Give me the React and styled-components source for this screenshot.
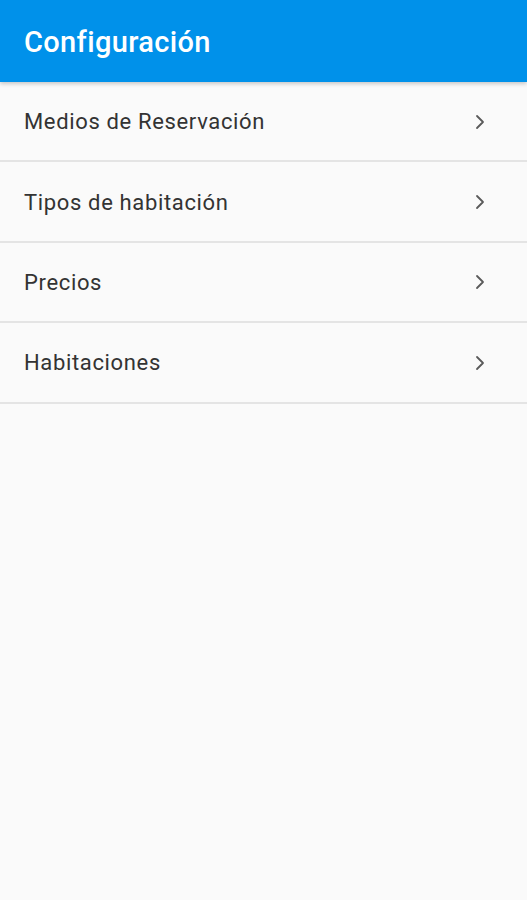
import React from "react";
import styled, { createGlobalStyle } from "styled-components";

const Global = createGlobalStyle`
  html, body { margin: 0; padding: 0; background: #fafafa; }
  body { font-family: Roboto, "Noto Sans", sans-serif; }
`;

const Page = styled.div`
  min-height: 900px;
  background: #fafafa;
  display: flex;
  flex-direction: column;
`;

const AppBar = styled.header`
  height: 82px;
  box-sizing: border-box;
  background: #0091ea;
  display: flex;
  align-items: center;
  padding: 2px 24px 0;
  box-shadow: 0 2px 4px rgba(0, 0, 0, 0.2);
  position: relative;
  z-index: 1;
`;

const Title = styled.h1`
  margin: 0;
  color: #ffffff;
  font-family: Roboto, sans-serif;
  font-weight: 500;
  font-size: 29px;
  letter-spacing: 0.35px;
`;

const List = styled.ul`
  list-style: none;
  margin: 0;
  padding: 0;
`;

const Row = styled.li`
  box-sizing: border-box;
  height: 80.4px;
  display: flex;
  align-items: center;
  justify-content: space-between;
  padding: 1px 42px 0 24px;
  border-bottom: 2px solid #e4e4e4;
`;

const Label = styled.span`
  font-family: Roboto, sans-serif;
  font-size: 22px;
  letter-spacing: 0.65px;
  color: #333333;
`;

const Chevron = () => (
  <svg width="10" height="16" viewBox="0 0 10 16" fill="none">
    <path d="M2 2 L8 8 L2 14" stroke="#5a5a5a" strokeWidth="1.8" strokeLinecap="round" strokeLinejoin="round" />
  </svg>
);

const items = ["Medios de Reservación", "Tipos de habitación", "Precios", "Habitaciones"];

export default function App() {
  return (
    <Page>
      <Global />
      <AppBar>
        <Title>Configuración</Title>
      </AppBar>
      <List>
        {items.map((t) => (
          <Row key={t}>
            <Label>{t}</Label>
            <Chevron />
          </Row>
        ))}
      </List>
    </Page>
  );
}
